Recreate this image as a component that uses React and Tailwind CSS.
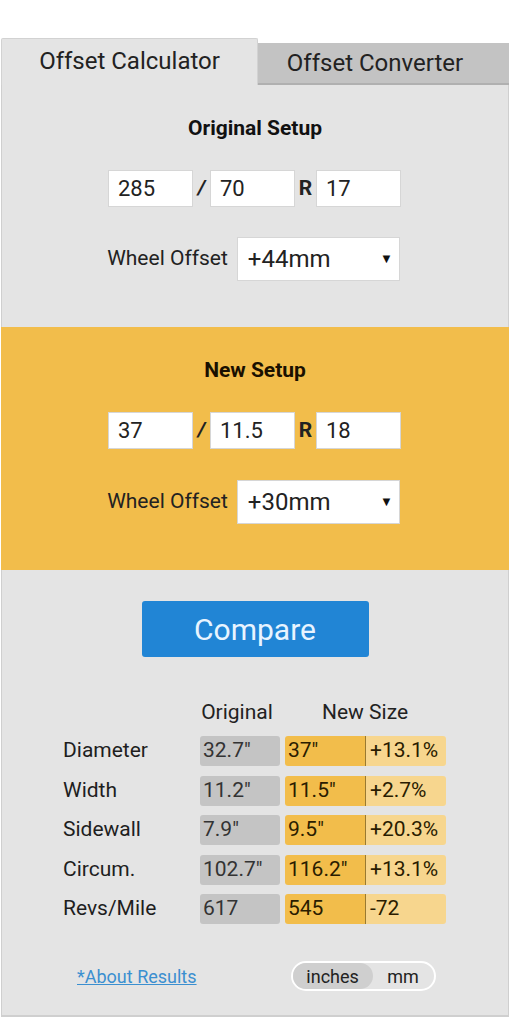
import React, { useState } from "react";

const font = { fontFamily: "Roboto, 'Noto Sans', sans-serif" };

function SizeInputs({ values }) {
  return (
    <div className="flex items-center justify-center">
      <div className="w-[85px] h-[37px] bg-white border border-[#d6d6d6] flex items-center pl-[9px] text-[22px] text-[#222]">
        {values[0]}
      </div>
      <div className="w-[17px] text-center text-[21px] font-bold italic text-[#222]">/</div>
      <div className="w-[85px] h-[37px] bg-white border border-[#d6d6d6] flex items-center pl-[9px] text-[22px] text-[#222]">
        {values[1]}
      </div>
      <div className="w-[21px] text-center text-[21px] font-bold text-[#222]">R</div>
      <div className="w-[85px] h-[37px] bg-white border border-[#d6d6d6] flex items-center pl-[9px] text-[22px] text-[#222]">
        {values[2]}
      </div>
    </div>
  );
}

function OffsetSelect({ value }) {
  return (
    <div className="flex items-center justify-center gap-[9px]">
      <span className="text-[21px] text-[#222]">Wheel Offset</span>
      <div className="w-[163px] h-[44px] bg-white border border-[#d6d6d6] flex items-center justify-between pl-[10px] pr-[6px]">
        <span className="text-[24px] text-[#222]">{value}</span>
        <span className="text-[13px] text-[#111]">▼</span>
      </div>
    </div>
  );
}

const rows = [
  ["Diameter", '32.7"', '37"', "+13.1%"],
  ["Width", '11.2"', '11.5"', "+2.7%"],
  ["Sidewall", '7.9"', '9.5"', "+20.3%"],
  ["Circum.", '102.7"', '116.2"', "+13.1%"],
  ["Revs/Mile", "617", "545", "-72"],
];

export default function App() {
  const [unit, setUnit] = useState("inches");

  return (
    <div className="min-h-screen bg-white pt-[38px]" style={font}>
      <div className="ml-[1px] w-[508px]">
        {/* Tabs */}
        <div className="flex items-end">
          <div className="w-[257px] h-[47px] bg-[#e4e4e4] border-t border-l border-r border-[#d2d2d2] rounded-t-[2px] flex items-center justify-center text-[24px] text-[#222] pb-[2px]">
            Offset Calculator
          </div>
          <div className="flex-1 h-[42px] bg-[#c3c3c3] border-b-2 border-[#b0b0b0] flex items-center justify-center pr-[17px] text-[24px] text-[#222]">
            Offset Converter
          </div>
        </div>

        {/* Panel */}
        <div className="bg-[#e4e4e4] border-l border-r border-b-2 border-[#cfcfcf] h-[932px] flex flex-col">
          {/* Original */}
          <div className="pt-[30px] pb-[46px] flex flex-col items-center">
            <h2 className="text-[21px] leading-[26px] font-bold text-[#111]">Original Setup</h2>
            <div className="mt-[29px] mr-[1px]">
              <SizeInputs values={["285", "70", "17"]} />
            </div>
            <div className="mt-[30px] mr-[3px]">
              <OffsetSelect value="+44mm" />
            </div>
          </div>

          {/* New */}
          <div className="bg-[#f2bd4b] pt-[30px] pb-[46px] flex flex-col items-center -mx-[1px]">
            <h2 className="text-[21px] leading-[26px] font-bold text-[#1a1000]">New Setup</h2>
            <div className="mt-[29px] mr-[1px]">
              <SizeInputs values={["37", "11.5", "18"]} />
            </div>
            <div className="mt-[31px] mr-[3px]">
              <OffsetSelect value="+30mm" />
            </div>
          </div>

          {/* Compare */}
          <div className="flex justify-center pt-[31px]">
            <button className="w-[227px] h-[56px] bg-[#2185d5] rounded-[3px] text-[30px] text-[#e8f4ff]">
              Compare
            </button>
          </div>

          {/* Results */}
          <div className="pl-[61px] pt-[42px]">
            <div className="flex h-[28px] items-center text-[21px] text-[#222]">
              <div className="w-[134px]" />
              <div className="w-[80px] text-center">Original</div>
              <div className="w-[166px] text-center ml-[5px]">New Size</div>
            </div>
            <div className="flex flex-col gap-[9.5px] mt-[9px]">
              {rows.map((r) => (
                <div key={r[0]} className="flex h-[30px] items-center text-[21px]">
                  <div className="w-[137px] text-[#1e1e1e]">{r[0]}</div>
                  <div className="w-[80px] h-full bg-[#c4c4c4] rounded-[3px] flex items-center pl-[3px] text-[#333]">
                    {r[1]}
                  </div>
                  <div className="ml-[5px] w-[81px] h-full bg-[#f2bd4b] rounded-l-[3px] border-r border-[#9a7a30] flex items-center pl-[3px] text-[#2a1c00]">
                    {r[2]}
                  </div>
                  <div className="w-[80px] h-full bg-[#f7d68e] rounded-r-[3px] flex items-center pl-[4px] text-[#2a1c00]">
                    {r[3]}
                  </div>
                </div>
              ))}
            </div>
          </div>

          {/* Footer */}
          <div className="flex items-center pl-[75px] mt-[37px]">
            <a href="#" className="text-[18px] text-[#3b8fd0] underline">*About Results</a>
            <div className="ml-[94px] w-[145px] h-[30px] rounded-full border-2 border-white flex items-center text-[18px] text-[#222]">
              <button
                onClick={() => setUnit("inches")}
                className={`w-[80px] h-full rounded-full flex items-center justify-center ${unit === "inches" ? "bg-[#cfcfcf]" : ""}`}
              >
                inches
              </button>
              <button
                onClick={() => setUnit("mm")}
                className={`flex-1 h-full rounded-full flex items-center justify-center ${unit === "mm" ? "bg-[#cfcfcf]" : ""}`}
              >
                mm
              </button>
            </div>
          </div>
        </div>
      </div>
    </div>
  );
}
